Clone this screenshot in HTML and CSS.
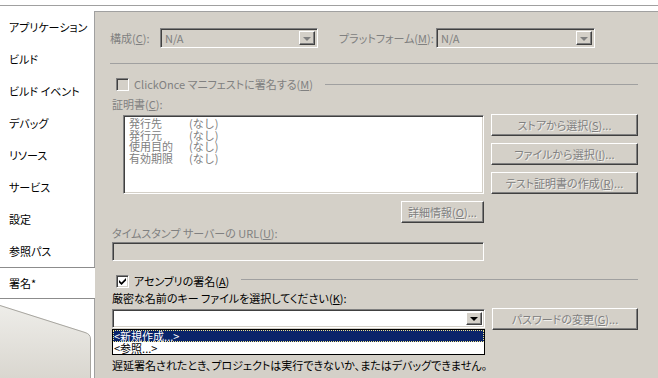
FILE: index.html
```html
<!DOCTYPE html>
<html lang="ja">
<head>
    <meta charset="UTF-8">
    <title>署名</title>
    <link rel="stylesheet" href="styles.css">
</head>
<body>
    <div class="topline"></div>
    <div class="main">
        <div class="tabs">
            <div class="tab">アプリケーション</div>
            <div class="tab">ビルド</div>
            <div class="tab">ビルド イベント</div>
            <div class="tab">デバッグ</div>
            <div class="tab">リソース</div>
            <div class="tab">サービス</div>
            <div class="tab">設定</div>
            <div class="tab">参照パス</div>
            <div class="tab active">署名*</div>
            <div class="tab-rest">
                <svg width="94" height="80" viewBox="0 0 94 80">
                    <defs>
                        <linearGradient id="shade" x1="0" y1="0" x2="0" y2="1">
                            <stop offset="0" stop-color="#eeede9"/>
                            <stop offset="1" stop-color="#d9d6cf"/>
                        </linearGradient>
                    </defs>
                    <path d="M0 6 L85 33 Q90 35 90 40 L90 80 L0 80 Z" fill="url(#shade)"/>
                    <path d="M0 6.5 L85 33.5 Q90.5 35 90.5 40 L90.5 80" fill="none" stroke="#a8a6a0"/>
                </svg>
            </div>
        </div>

        <div class="panel">
            <div class="config-row">
                <span class="label disabled cfg-label">構成(<u>C</u>):</span>
                <div class="combo disabled cfg-combo">
                    <span class="combo-text">N/A</span>
                    <span class="drop-btn"><span class="arrow grey"></span></span>
                </div>
                <span class="label disabled plat-label">プラットフォーム(<u>M</u>):</span>
                <div class="combo disabled plat-combo">
                    <span class="combo-text">N/A</span>
                    <span class="drop-btn"><span class="arrow grey"></span></span>
                </div>
            </div>

            <div class="separator"></div>

            <div class="group-head">
                <span class="checkbox off"></span>
                <span class="disabled">ClickOnce マニフェストに署名する(<u>M</u>)</span>
                <span class="group-line"></span>
            </div>

            <div class="label disabled cert-label">証明書(<u>C</u>):</div>
            <div class="cert-row">
                <div class="cert-box">
                    <span>発行先</span><span>(なし)</span>
                    <span>発行元</span><span>(なし)</span>
                    <span>使用目的</span><span>(なし)</span>
                    <span>有効期限</span><span>(なし)</span>
                </div>
                <div class="cert-buttons">
                    <div class="button off">ストアから選択(<u>S</u>)...</div>
                    <div class="button off">ファイルから選択(<u>I</u>)...</div>
                    <div class="button off">テスト証明書の作成(<u>R</u>)...</div>
                </div>
            </div>
            <div class="button off details-btn">詳細情報(<u>O</u>)...</div>

            <div class="label disabled stamp-label">タイムスタンプ サーバーの URL(<u>U</u>):</div>
            <div class="textbox"></div>

            <div class="group-head assembly">
                <span class="checkbox on">
                    <svg width="9" height="9" viewBox="0 0 9 9"><path d="M1 3 L3.5 5.5 L8 1 L8 3.5 L3.5 8 L1 5.5 Z" fill="#000"/></svg>
                </span>
                <span>アセンブリの署名(<u>A</u>)</span>
                <span class="group-line"></span>
            </div>

            <div class="label key-label">厳密な名前のキー ファイルを選択してください(<u>K</u>):</div>
            <div class="key-row">
                <div class="key-combo-wrap">
                    <div class="combo key-combo">
                        <span class="combo-text"></span>
                        <span class="drop-btn"><span class="arrow"></span></span>
                    </div>
                    <div class="droplist">
                        <div class="item selected">&lt;新規作成...&gt;</div>
                        <div class="item">&lt;参照...&gt;</div>
                    </div>
                </div>
                <div class="button off pass-btn">パスワードの変更(<u>G</u>)...</div>
            </div>

            <div class="note">遅延署名されたとき、プロジェクトは実行できないか、またはデバッグできません。</div>
        </div>
    </div>
</body>
</html>
```

FILE: styles.css
```css
body {
    margin: 0;
    background-color: #fff;
    font-family: "Noto Sans CJK JP", "Noto Sans", sans-serif;
    font-size: 11px;
    font-feature-settings: "palt";
    color: #000;
    height: 378px;
    overflow: hidden;
}
u {
    text-decoration-thickness: 1px;
    text-underline-offset: 1px;
}
.topline {
    height: 5px;
    border-bottom: 1px solid #a0a0a0;
}
.main {
    display: flex;
    margin-top: 5px;
    height: 367px;
}

/* left tab list */
.tabs {
    width: 94px;
    flex-shrink: 0;
    display: flex;
    flex-direction: column;
}
.tab {
    height: 32px;
    line-height: 32px;
    padding-left: 9px;
    box-sizing: border-box;
    white-space: nowrap;
}
.tab.active {
    line-height: 30px;
    border-top: 1px solid #8c8c8c;
    border-bottom: 1px solid #8c8c8c;
    background-color: #fff;
    margin-right: -1px;
    position: relative;
    z-index: 1;
}
.tab-rest {
    flex: 1;
    overflow: hidden;
}
.tab-rest svg {
    display: block;
}

/* right page */
.panel {
    flex: 1;
    background-color: #d4d0c8;
    border-left: 1px solid #a0a0a0;
    border-top: 1px solid #a0a0a0;
    padding: 16px 23px 0 17px;
}
.label {
    display: block;
    height: 12px;
    line-height: 12px;
    white-space: nowrap;
}
.disabled {
    color: #808080;
}

/* combo boxes */
.config-row {
    display: flex;
    align-items: center;
    height: 20px;
}
.cfg-label {
    width: 50px;
    margin-left: -2px;
}
.cfg-combo {
    width: 158px;
    height: 20px;
}
.plat-label {
    margin-left: 21px;
    width: 97px;
}
.plat-combo {
    width: 159px;
    height: 20px;
}
.combo {
    box-sizing: border-box;
    display: flex;
    align-items: center;
    border: 1px solid;
    border-color: #808080 #fff #fff #808080;
    box-shadow: inset 1px 1px 0 #404040, inset -1px -1px 0 #d4d0c8;
    background-color: #fff;
    padding: 2px;
}
.combo.disabled {
    background-color: #d4d0c8;
}
.combo-text {
    flex: 1;
    padding-left: 2px;
    line-height: 12px;
}
.drop-btn {
    width: 16px;
    height: 100%;
    box-sizing: border-box;
    background-color: #d4d0c8;
    border: 1px solid;
    border-color: #fff #404040 #404040 #fff;
    box-shadow: inset -1px -1px 0 #808080;
    display: flex;
    align-items: center;
    justify-content: center;
}
.arrow {
    width: 0;
    height: 0;
    border-left: 4px solid transparent;
    border-right: 4px solid transparent;
    border-top: 4px solid #000;
    margin-top: 1px;
}
.arrow.grey {
    border-top-color: #808080;
}

.separator {
    margin: 15px -23px 0 -2px;
    border-top: 1px solid #a0a0a0;
}

/* group headers with a check box */
.group-head {
    display: flex;
    align-items: center;
    height: 14px;
    margin-top: 13px;
    padding-left: 4px;
    white-space: nowrap;
}
.checkbox {
    width: 13px;
    height: 13px;
    box-sizing: border-box;
    border: 1px solid;
    border-color: #808080 #fff #fff #808080;
    box-shadow: inset 1px 1px 0 #404040, inset -1px -1px 0 #d4d0c8;
    margin-right: 5px;
    display: flex;
    align-items: center;
    justify-content: center;
}
.checkbox.off {
    background-color: #d4d0c8;
}
.checkbox.on {
    background-color: #fff;
}
.checkbox svg {
    display: block;
}
.group-line {
    flex: 1;
    border-top: 1px solid #a0a0a0;
    margin-left: 12px;
}
.assembly .group-line {
    margin-top: -4px;
}

/* certificate */
.cert-label {
    margin-top: 7px;
}
.cert-row {
    display: flex;
    margin-top: 5px;
}
.cert-box {
    box-sizing: border-box;
    width: 361px;
    height: 79px;
    margin-left: 11px;
    background-color: #fff;
    border: 1px solid;
    border-color: #808080 #fff #fff #808080;
    box-shadow: inset 1px 1px 0 #404040, inset -1px -1px 0 #d4d0c8;
    padding: 2px 5px;
    display: grid;
    grid-template-columns: 60px auto;
    grid-auto-rows: 11.5px;
    align-content: start;
    font-size: 11px;
    line-height: 11.5px;
    font-feature-settings: normal;
    color: #808080;
}
.cert-buttons {
    display: flex;
    flex-direction: column;
    gap: 7px;
    margin-left: 7px;
    margin-top: -1px;
}
.button {
    box-sizing: border-box;
    height: 22px;
    background-color: #d4d0c8;
    border: 1px solid;
    border-color: #fff #404040 #404040 #fff;
    box-shadow: inset -1px -1px 0 #808080;
    display: flex;
    align-items: center;
    justify-content: center;
    white-space: nowrap;
}
.button.off {
    color: #808080;
    text-shadow: 1px 1px 0 rgba(255, 255, 255, 0.7);
}
.cert-buttons .button {
    width: 147px;
}
.details-btn {
    width: 83px;
    height: 22px;
    margin: 7px 0 0 289px;
}

/* time stamp */
.stamp-label {
    margin-top: 4px;
}
.textbox {
    box-sizing: border-box;
    width: 372px;
    height: 19px;
    margin-top: 3px;
    background-color: #d4d0c8;
    border: 1px solid;
    border-color: #808080 #fff #fff #808080;
    box-shadow: inset 1px 1px 0 #404040, inset -1px -1px 0 #d4d0c8;
}

/* key file */
.key-label {
    margin-top: 4px;
}
.key-row {
    display: flex;
    margin-top: 5px;
}
.key-combo-wrap {
    position: relative;
}
.key-combo {
    width: 373px;
    height: 19px;
}
.droplist {
    position: absolute;
    top: 20px;
    left: 0;
    width: 373px;
    box-sizing: border-box;
    border: 1px solid #000;
    background-color: #fff;
    z-index: 2;
}
.item {
    height: 12px;
    line-height: 12px;
    padding-left: 1px;
}
.item.selected {
    background-color: #0a246a;
    color: #fff;
    outline: 1px dotted #f0e68c;
    outline-offset: -1px;
}
.pass-btn {
    width: 146px;
    margin: -1px 0 0 7px;
}
.note {
    margin-top: 29px;
    line-height: 12px;
    white-space: nowrap;
}
```
